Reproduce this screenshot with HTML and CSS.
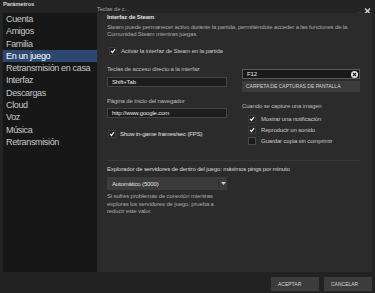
FILE: index.html
```html
<!DOCTYPE html>
<html lang="es">
<head>
  <meta charset="UTF-8">
  <meta name="viewport" content="width=device-width, initial-scale=1.0">
  <title>Parámetros</title>
  <link rel="stylesheet" href="styles.css">
</head>
<body>
  <div class="window">
    <div class="titlebar">
      <span class="win-title">Parámetros</span>
      <span class="tab-hint">Teclas de c...</span>
      <span class="win-controls">
        <svg width="16" height="8" viewBox="0 0 16 8">
          <line x1="1" y1="6.5" x2="6" y2="6.5" stroke="#bdbdbd" stroke-width="1.2"/>
          <line x1="9" y1="1.5" x2="14" y2="6.5" stroke="#d0d0d0" stroke-width="1.4"/>
          <line x1="14" y1="1.5" x2="9" y2="6.5" stroke="#d0d0d0" stroke-width="1.4"/>
        </svg>
      </span>
    </div>

    <div class="main">
      <nav class="sidebar">
        <div class="nav-item">Cuenta</div>
        <div class="nav-item">Amigos</div>
        <div class="nav-item">Familia</div>
        <div class="nav-item active">En un juego</div>
        <div class="nav-item">Retransmisión en casa</div>
        <div class="nav-item">Interfaz</div>
        <div class="nav-item">Descargas</div>
        <div class="nav-item">Cloud</div>
        <div class="nav-item">Voz</div>
        <div class="nav-item">Música</div>
        <div class="nav-item">Retransmisión</div>
      </nav>

      <section class="panel">
        <div class="section-title">Interfaz de Steam</div>
        <p class="intro">
          Steam puede permanecer activo durante la partida, permitiéndote acceder a las funciones de la<br>
          Comunidad Steam mientras juegas.
        </p>

        <label class="check overlay-check">
          <span class="box checked">
            <svg width="8" height="8" viewBox="0 0 8 8"><polyline points="1.5,4 3.3,6 6.6,1.6" fill="none" stroke="#fff" stroke-width="1.5"/></svg>
          </span>
          Activar la interfaz de Steam en la partida
        </label>

        <div class="columns">
          <div class="col">
            <div class="field-label">Teclas de acceso directo a la interfaz</div>
            <div class="input first-input">Shift+Tab</div>
            <div class="field-label second-label">Página de inicio del navegador</div>
            <div class="input second-input">http://www.google.com</div>
            <label class="check fps-check">
              <span class="box checked">
                <svg width="8" height="8" viewBox="0 0 8 8"><polyline points="1.5,4 3.3,6 6.6,1.6" fill="none" stroke="#fff" stroke-width="1.5"/></svg>
              </span>
              <span class="strong">Show in-game frames/sec (FPS)</span>
            </label>
          </div>

          <div class="col">
            <div class="input key-input">
              <span>F12</span>
              <svg width="7" height="7" viewBox="0 0 7 7">
                <circle cx="3.5" cy="3.5" r="3.5" fill="#e6e6e6"/>
                <line x1="2" y1="2" x2="5" y2="5" stroke="#1c1c1c" stroke-width="1.1"/>
                <line x1="5" y1="2" x2="2" y2="5" stroke="#1c1c1c" stroke-width="1.1"/>
              </svg>
            </div>
            <div class="btn folder-btn">CARPETA DE CAPTURAS DE PANTALLA</div>
            <div class="field-label capture-label">Cuando se capture una imagen</div>
            <div class="capture-list">
              <label class="check">
                <span class="box checked">
                  <svg width="8" height="8" viewBox="0 0 8 8"><polyline points="1.5,4 3.3,6 6.6,1.6" fill="none" stroke="#fff" stroke-width="1.5"/></svg>
                </span>
                Mostrar una notificación
              </label>
              <label class="check">
                <span class="box checked">
                  <svg width="8" height="8" viewBox="0 0 8 8"><polyline points="1.5,4 3.3,6 6.6,1.6" fill="none" stroke="#fff" stroke-width="1.5"/></svg>
                </span>
                Reproducir un sonido
              </label>
              <label class="check">
                <span class="box"></span>
                Guardar copia sin comprimir
              </label>
            </div>
          </div>
        </div>

        <div class="divider"></div>

        <div class="browser-title">Explorador de servidores de dentro del juego: máximos pings por minuto</div>
        <div class="select">
          <span class="select-value">Automático (5000)</span>
          <span class="select-arrow">
            <svg width="5" height="3" viewBox="0 0 5 3"><polygon points="0,0 5,0 2.5,3" fill="#cfcfcf"/></svg>
          </span>
        </div>
        <p class="note">
          Si sufres problemas de conexión mientras<br>
          exploras los servidores de juego, prueba a<br>
          reducir este valor.
        </p>
      </section>
    </div>

    <footer class="footer">
      <div class="btn footer-btn">ACEPTAR</div>
      <div class="btn footer-btn">CANCELAR</div>
    </footer>
  </div>
</body>
</html>
```

FILE: styles.css
```css
* {
  box-sizing: border-box;
}

body {
  margin: 0;
  background-color: #242424;
  font-family: "Liberation Sans", Arial, sans-serif;
  color: #c4c4c4;
}

.window {
  width: 375px;
  height: 293px;
  display: flex;
  flex-direction: column;
  background-color: #242424;
  overflow: hidden;
}

/* Title bar */
.titlebar {
  height: 13px;
  display: flex;
  flex-shrink: 0;
}

.win-title {
  width: 97px;
  padding-left: 3px;
  font-size: 6px;
  font-weight: bold;
  letter-spacing: -0.2px;
  line-height: 9px;
  color: #d2d2d2;
}

.tab-hint {
  align-self: flex-end;
  font-size: 5.5px;
  line-height: 7px;
  color: #a8a8a8;
}

.win-controls {
  margin-left: auto;
  padding-right: 3px;
  padding-top: 1px;
}

/* Body */
.main {
  flex: 1;
  display: flex;
  padding: 0 3px;
}

.sidebar {
  width: 94px;
  background-color: #171717;
}

.nav-item {
  height: 12.3px;
  line-height: 12.3px;
  padding-left: 3px;
  font-size: 9px;
  letter-spacing: -0.35px;
  color: #c8c8c8;
  white-space: nowrap;
}

.nav-item.active {
  background-color: #2c4870;
  color: #ffffff;
}

.panel {
  flex: 1;
  background-color: #2b2b2b;
  padding: 0 12px 0 10px;
  font-size: 6px;
  letter-spacing: -0.15px;
}

.section-title {
  font-weight: bold;
  line-height: 8px;
  color: #e0e0e0;
}

.intro {
  margin: 3px 0 0;
  line-height: 7px;
  color: #a9a9a9;
  white-space: nowrap;
}

.check {
  display: flex;
  align-items: center;
  gap: 4px;
  height: 8px;
  line-height: 8px;
  color: #c8c8c8;
}

.box {
  width: 8px;
  height: 8px;
  flex-shrink: 0;
  background-color: #1b1b1b;
  border: 1px solid #4a4a4a;
  display: flex;
  align-items: center;
  justify-content: center;
}

.box.checked {
  background-color: #222222;
  border-color: #3a3a3a;
}

.box svg {
  display: block;
}

.overlay-check {
  margin: 9px 0 0 2px;
}

.strong {
  color: #e4e4e4;
}

/* Two columns */
.columns {
  display: grid;
  grid-template-columns: 120px 118px;
  column-gap: 15px;
  margin-top: 10px;
  align-items: start;
}

.col {
  display: flex;
  flex-direction: column;
}

.field-label {
  line-height: 8px;
  color: #bdbdbd;
}

.input {
  height: 10px;
  line-height: 8px;
  padding-left: 4px;
  background-color: #1d1d1d;
  border: 1px solid #444444;
  color: #e6e6e6;
}

.first-input {
  margin-top: 4px;
}

.second-label {
  margin-top: 9.5px;
}

.second-input {
  margin-top: 3.5px;
}

.fps-check {
  margin: 12px 0 0 1px;
}

.key-input {
  margin-top: 4px;
  display: flex;
  align-items: center;
  justify-content: space-between;
  padding-right: 1px;
  background-color: #191919;
  border-color: #5a5a5a;
}

.key-input svg {
  display: block;
}

.btn {
  background-color: #3c3c3c;
  color: #d6d6d6;
  font-size: 5px;
  letter-spacing: 0;
  white-space: nowrap;
}

.folder-btn {
  margin-top: 2px;
  height: 11px;
  line-height: 11px;
  padding-left: 4px;
}

.capture-label {
  margin-top: 9.5px;
}

.capture-list {
  margin: 5.5px 0 0 6px;
  display: flex;
  flex-direction: column;
  gap: 3px;
}

.capture-list .check {
  gap: 5px;
}

.divider {
  margin-top: 15px;
  height: 1px;
  background-color: #383838;
}

.browser-title {
  margin-top: 4px;
  line-height: 8px;
  color: #dadada;
}

.select {
  margin-top: 4px;
  width: 120px;
  height: 13px;
  display: flex;
  align-items: center;
  background-color: #3b3b3b;
  color: #e0e0e0;
}

.select-value {
  flex: 1;
  padding-left: 5px;
}

.select-arrow {
  width: 9px;
  height: 9px;
  border-left: 1px solid #2a2a2a;
  display: flex;
  align-items: center;
  justify-content: center;
}

.select-arrow svg {
  display: block;
}

.note {
  margin: 3px 0 0;
  line-height: 7.5px;
  color: #a9a9a9;
}

/* Footer */
.footer {
  height: 21px;
  flex-shrink: 0;
  display: flex;
  justify-content: flex-end;
  align-items: flex-start;
  gap: 5px;
  padding: 5px 3px 0 0;
  background-color: #222222;
}

.footer-btn {
  width: 48px;
  height: 14px;
  line-height: 14px;
  padding-left: 7px;
}
```
